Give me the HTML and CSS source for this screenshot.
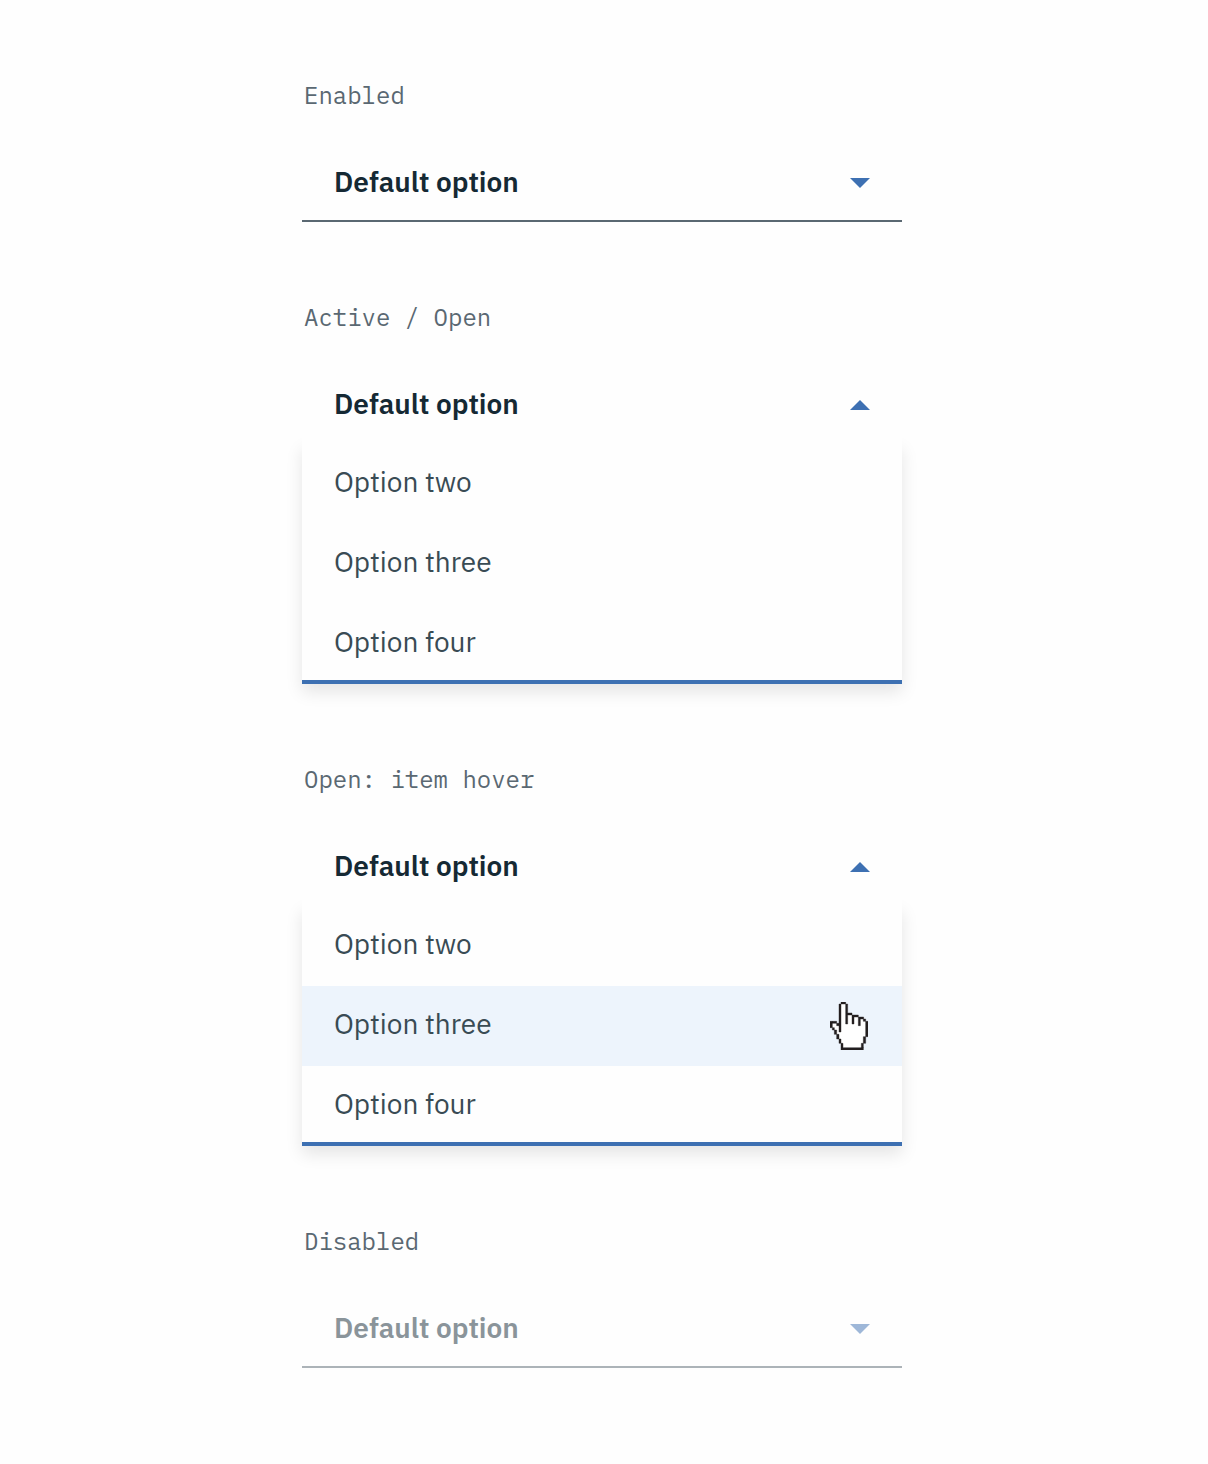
FILE: index.html
```
<!DOCTYPE html>
<html lang="en">
<head>
<meta charset="utf-8">
<title>Dropdown states</title>
<link rel="stylesheet" href="styles.css">
</head>
<body>
<main class="states">
  <section class="state">
    <h2 class="label">Enabled</h2>
    <div class="field"><span class="value">Default option</span><svg class="caret" viewBox="0 0 20 10"><path d="M0 0h20L10 10z"/></svg></div>
  </section>
  <section class="state state-open">
    <h2 class="label">Active / Open</h2>
    <div class="field open"><span class="value">Default option</span><svg class="caret" viewBox="0 0 20 10"><path d="M0 10h20L10 0z"/></svg></div>
    <ul class="menu">
      <li class="option"><span>Option two</span></li>
      <li class="option"><span>Option three</span></li>
      <li class="option"><span>Option four</span></li>
    </ul>
  </section>
  <section class="state state-open">
    <h2 class="label">Open: item hover</h2>
    <div class="field open"><span class="value">Default option</span><svg class="caret" viewBox="0 0 20 10"><path d="M0 10h20L10 0z"/></svg></div>
    <ul class="menu">
      <li class="option"><span>Option two</span></li>
      <li class="option hover"><span>Option three</span>
        <svg class="pointer" viewBox="30 36 114 144">
          <path fill="#fff" d="M63 42h14v27h19v6h19v7h19v12h6v46h-6v20h-6v13H66v-13h-6v-13h-6v-14h-6v-13h-6v-7h-6v-13h14v7h7v7h6z"/>
          <path fill="#231f20" stroke="#231f20" stroke-width="1.2" d="M63 36h14v6h-14zM57 42h6v84h-6zM77 42h6v60h-6zM83 69h13v6H83zM96 75h6v27h-6zM102 75h13v6h-13zM115 81h6v26h-6zM121 81h10v6h-10zM130 87h7v7h-7zM137 94h7v46h-7zM130 140h7v20h-7zM124 160h6v14h-6zM63 173h67v7H63zM63 160h6v13h-6zM57 147h6v13h-6zM50 133h7v14h-7zM43 120h7v13h-7zM37 113h6v7h-6zM30 94h7v19h-7zM37 94h13v6H37zM50 100h7v7h-7z"/>
        </svg>
      </li>
      <li class="option"><span>Option four</span></li>
    </ul>
  </section>
  <section class="state">
    <h2 class="label">Disabled</h2>
    <div class="field disabled"><span class="value">Default option</span><svg class="caret" viewBox="0 0 20 10"><path d="M0 0h20L10 10z"/></svg></div>
  </section>
</main>
</body>
</html>
```
FILE: styles.css
```
* { box-sizing: border-box; }
body { margin: 0; background: #fefefe; font-family: "IBM Plex Sans", "Noto Sans", sans-serif; }
.states { width: 600px; min-height: 1464px; margin-left: 302px; padding-top: 79px; }
.state { height: 222px; }
.state-open { height: 462px; }
.label {
  margin: 0 0 33px 2px;
  font: 400 24px/32px "IBM Plex Mono", "Liberation Mono", monospace;
  color: #5a6872;
  white-space: pre;
}
.field {
  display: flex;
  align-items: center;
  justify-content: space-between;
  height: 78px;
  padding: 0 32px;
  border-bottom: 2px solid #5a6872;
  color: #152934;
}
.field.open {
  position: relative;
  z-index: 1;
  height: 76px;
  border: 0;
  background: #fefefe;
}
.value { font-size: 28px; font-weight: 600; line-height: 36px; white-space: nowrap; }
.caret { display: block; width: 20px; height: 10px; margin-top: 2px; fill: #3d70b2; }
.disabled { color: #8a949a; border-color: #acb3b8; }
.disabled .caret { fill: #9eb7d8; }
.menu {
  list-style: none;
  margin: 0;
  padding: 0;
  height: 242px;
  background: #fefefe;
  border-bottom: 4px solid #3d70b2;
  box-shadow: 0 8px 16px rgba(0, 0, 0, .1);
}
.option {
  display: flex;
  align-items: flex-start;
  justify-content: space-between;
  height: 80px;
  padding: 20px 34px 0 32px;
  font-size: 28px;
  line-height: 36px;
  color: #394b54;
}
.option:first-child { height: 82px; padding-top: 22px; }
.option:last-child { height: 76px; }
.hover { background: #edf4fc; }
.pointer { width: 38px; height: 48px; margin-top: -4px; }
```
